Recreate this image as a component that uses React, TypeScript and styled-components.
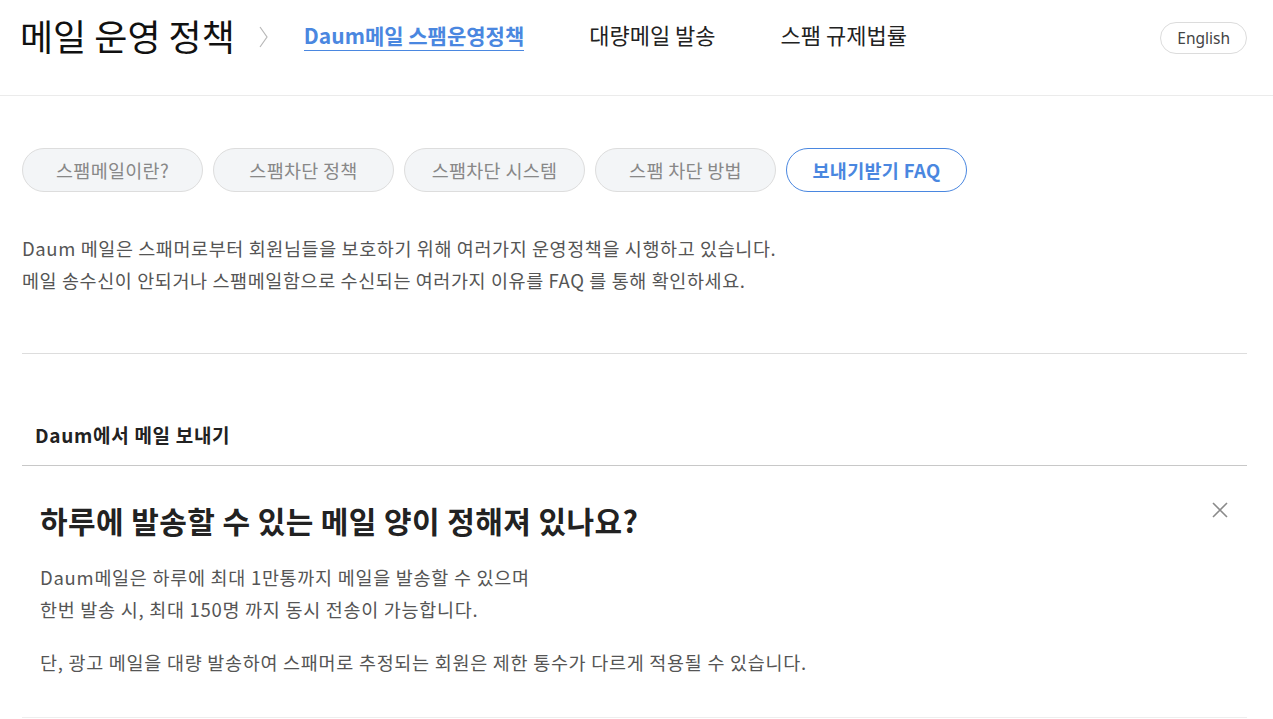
import React, { useState } from 'react';
import styled, { createGlobalStyle } from 'styled-components';

const GlobalStyle = createGlobalStyle`
  * { box-sizing: border-box; }
  body {
    margin: 0;
    background: #fff;
    font-family: "Noto Sans CJK KR", "Noto Sans", sans-serif;
    color: #222;
  }
`;

const BLUE = '#4a87e0';

const Header = styled.header`
  display: flex;
  align-items: center;
  height: 96px;
  padding: 0 26px 26px 20px;
  border-bottom: 1px solid #ebebeb;
`;

const SiteTitle = styled.h1`
  margin: 0;
  font-size: 36px;
  font-weight: 400;
  color: #111;
`;

const Chevron = styled.svg`
  margin: 4px 36px 0 24px;
  flex-shrink: 0;
`;

const Nav = styled.nav`
  display: flex;
  align-items: center;
  gap: 65px;
  flex: 1;
`;

const NavLink = styled.a<{ $active?: boolean }>`
  font-size: ${({ $active }) => ($active ? '21px' : '22px')};
  line-height: 28px;
  font-weight: ${({ $active }) => ($active ? 700 : 400)};
  color: ${({ $active }) => ($active ? BLUE : '#222')};
  text-decoration: none;
  padding-bottom: 1px;
  border-bottom: 1px solid ${({ $active }) => ($active ? BLUE : 'transparent')};
  margin-top: ${({ $active }) => ($active ? '2px' : '0')};
  cursor: pointer;
`;

const LangButton = styled.button`
  height: 32px;
  padding: 0 16px;
  margin-top: 6px;
  border: 1px solid #dcdcdc;
  border-radius: 16px;
  background: #fff;
  color: #444;
  font-family: "Noto Sans", sans-serif;
  font-size: 15.5px;
  cursor: pointer;
`;

const Main = styled.main`
  padding: 52px 26px 0 22px;
`;

const Tabs = styled.div`
  display: flex;
  gap: 10px;
`;

const Tab = styled.button<{ $active?: boolean }>`
  width: 181px;
  height: 44px;
  border-radius: 22px;
  border: 1px solid ${({ $active }) => ($active ? BLUE : '#dddddd')};
  background: ${({ $active }) => ($active ? '#fff' : '#f3f5f7')};
  color: ${({ $active }) => ($active ? BLUE : '#888')};
  font-family: "Noto Sans CJK KR", sans-serif;
  font-size: 18.5px;
  letter-spacing: 0.3px;
  font-weight: ${({ $active }) => ($active ? 700 : 400)};
  cursor: pointer;
`;

const Intro = styled.p`
  margin: 40px 0 0;
  font-size: 18.5px;
  letter-spacing: 0.6px;
  line-height: 32px;
  color: #555;
  padding-bottom: 57px;
  border-bottom: 1px solid #dddddd;
`;

const Category = styled.h2`
  margin: 0;
  padding: 68px 13px 0;
  height: 112px;
  font-size: 19px;
  letter-spacing: 0.7px;
  line-height: 26px;
  font-weight: 700;
  color: #222;
  border-bottom: 1px solid #c8c8c8;
`;

const Item = styled.section`
  position: relative;
  padding: 34px 19px 39px 18px;
  border-bottom: 1px solid #eeeeee;
`;

const Question = styled.h3`
  margin: 0;
  font-size: 30px;
  letter-spacing: 0.4px;
  line-height: 40px;
  font-weight: 700;
  color: #222;
`;

const CloseButton = styled.button`
  position: absolute;
  top: 35px;
  right: 18px;
  width: 18px;
  height: 18px;
  padding: 0;
  border: 0;
  background: none;
  cursor: pointer;
`;

const Answer = styled.p`
  margin: 21px 0 0;
  font-size: 18.5px;
  letter-spacing: 0.72px;
  line-height: 32px;
  color: #555;
`;

const tabs = ['스팸메일이란?', '스팸차단 정책', '스팸차단 시스템', '스팸 차단 방법', '보내기받기 FAQ'];

const App: React.FC = () => {
  const [activeTab, setActiveTab] = useState(4);

  return (
    <>
      <GlobalStyle />
      <Header>
        <SiteTitle>메일 운영 정책</SiteTitle>
        <Chevron width="9" height="22" viewBox="0 0 9 22">
          <polyline points="1,1 8,11 1,21" fill="none" stroke="#b8b8b8" strokeWidth="1.2" />
        </Chevron>
        <Nav>
          <NavLink $active>Daum메일 스팸운영정책</NavLink>
          <NavLink>대량메일 발송</NavLink>
          <NavLink>스팸 규제법률</NavLink>
        </Nav>
        <LangButton>English</LangButton>
      </Header>
      <Main>
        <Tabs>
          {tabs.map((t, i) => (
            <Tab key={t} $active={i === activeTab} onClick={() => setActiveTab(i)}>
              {t}
            </Tab>
          ))}
        </Tabs>
        <Intro>
          Daum 메일은 스패머로부터 회원님들을 보호하기 위해 여러가지 운영정책을 시행하고 있습니다.
          <br />
          메일 송수신이 안되거나 스팸메일함으로 수신되는 여러가지 이유를 FAQ 를 통해 확인하세요.
        </Intro>
        <Category>Daum에서 메일 보내기</Category>
        <Item>
          <Question>하루에 발송할 수 있는 메일 양이 정해져 있나요?</Question>
          <CloseButton aria-label="닫기">
            <svg width="18" height="18" viewBox="0 0 18 18">
              <path d="M2 2L16 16M16 2L2 16" stroke="#8a8a8a" strokeWidth="1.6" />
            </svg>
          </CloseButton>
          <Answer>
            Daum메일은 하루에 최대 1만통까지 메일을 발송할 수 있으며
            <br />
            한번 발송 시, 최대 150명 까지 동시 전송이 가능합니다.
          </Answer>
          <Answer>단, 광고 메일을 대량 발송하여 스패머로 추정되는 회원은 제한 통수가 다르게 적용될 수 있습니다.</Answer>
        </Item>
      </Main>
    </>
  );
};

export default App;
